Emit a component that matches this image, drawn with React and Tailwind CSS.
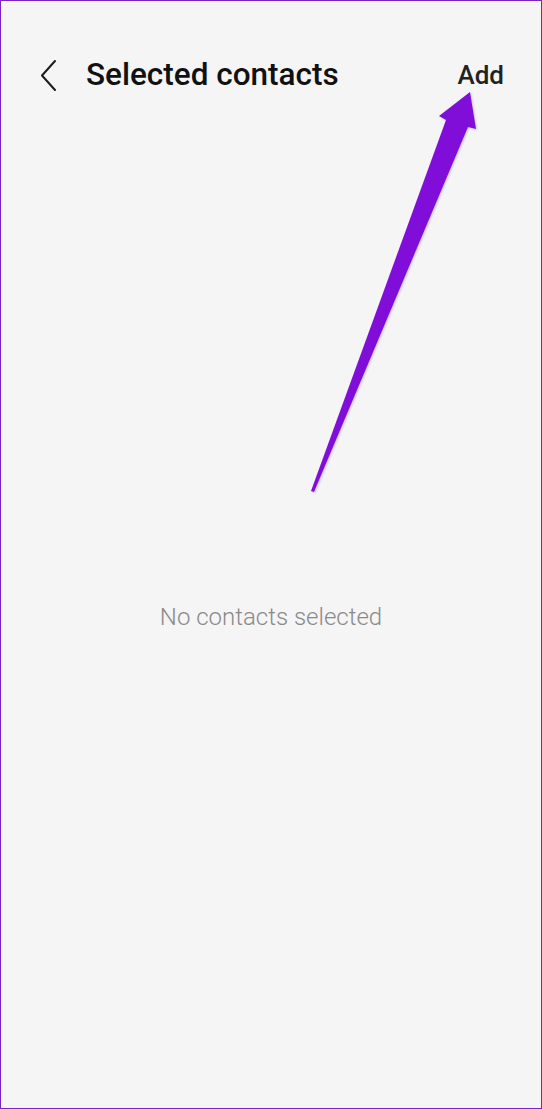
import React from "react";

const Arrow = () => (
  <svg
    className="absolute left-0 top-0 pointer-events-none"
    width="542"
    height="1109"
    viewBox="0 0 542 1109"
  >
    <defs>
      <filter id="shadow" x="-20%" y="-20%" width="140%" height="140%">
        <feDropShadow dx="1" dy="1" stdDeviation="1.2" floodColor="#000" floodOpacity="0.22" />
      </filter>
    </defs>
    <path
      d="M310 490 L445 119 L438 115 L469 91 L475 128 L467 126 L313 491 Z"
      fill="#8010d8"
      filter="url(#shadow)"
    />
  </svg>
);

const App = () => {
  return (
    <div
      className="relative w-[542px] h-[1109px] bg-[#f5f5f5] border border-[#7b22c4] overflow-hidden"
      style={{ fontFamily: "Roboto, 'Noto Sans', sans-serif" }}
    >
      {/* Header */}
      <header className="flex items-center h-[52px] mt-[48px] pl-[38px] pr-[37px]">
        <button className="w-[18px] h-[32px] flex items-center">
          <svg width="18" height="32" viewBox="0 0 18 32" fill="none">
            <path d="M16 2 L3 16.5 L16 31" stroke="#1c1c1c" strokeWidth="2" strokeLinecap="round" strokeLinejoin="round" />
          </svg>
        </button>
        <h1 className="ml-[29px] text-[31.5px] font-medium text-[#111]">
          Selected contacts
        </h1>
        <span className="ml-auto text-[26px] font-medium text-[#222]">Add</span>
      </header>

      {/* Empty state */}
      <main className="flex justify-center pt-[498px]">
        <p className="text-[24px] font-light text-[#8a8a8a]">No contacts selected</p>
      </main>

      <Arrow />
    </div>
  );
};

export default App;
